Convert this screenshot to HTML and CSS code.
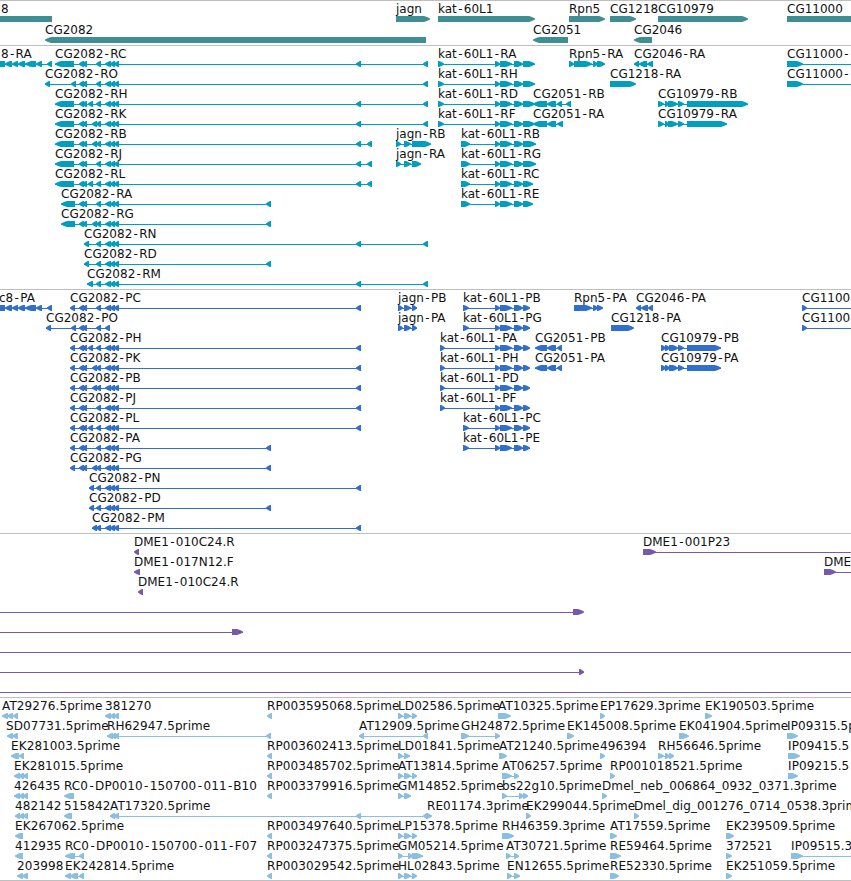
FILE: index.html
```
<!DOCTYPE html>
<html lang="en">
<head>
  <meta charset="UTF-8">
  <meta name="viewport" content="width=device-width, initial-scale=1.0">
  <title>Genome Browser</title>
  <link rel="stylesheet" href="styles.css">
</head>
<body>

  <main class="browser">
    <svg class="track genes" id="genes"></svg>
    <svg class="track transcripts" id="transcripts"></svg>
    <svg class="track proteins" id="proteins"></svg>
    <svg class="track clones" id="clones"></svg>
    <svg class="track ests" id="ests"></svg>
  </main>

  <script src="script.js"></script>
</body>
</html>
```
FILE: styles.css
```
body {
  margin: 0;
  background-color: #fff;
  overflow: hidden;
}

.browser {
  display: flex;
  flex-direction: column;
  border-bottom: 1px solid #bfbfbf;
}

.track {
  display: block;
  box-sizing: border-box;
  width: 100%;
  border-top: 1px solid #bfbfbf;
  overflow: hidden;
}

.track text {
  font-family: "DejaVu Sans", sans-serif;
  font-size: 12px;
  fill: #111;
}

.genes {
  height: 45px;
  color: #3e8e93;
}

.transcripts {
  height: 244px;
  color: #009fc0;
}

.proteins {
  height: 244px;
  color: #306fce;
}

.clones {
  height: 164px;
  color: #7859a8;
}

.ests {
  height: 183px;
  color: #8abfdf;
}

.ests text {
  letter-spacing: 0.1px;
}

.exon,
.intron {
  fill: currentColor;
}

.intron {
  shape-rendering: crispEdges;
}
```
FILE: script.js
```
const SVG = 'http://www.w3.org/2000/svg';
const OFF = 900; // past the right edge

// exon groups shared by the CG2082 isoforms
const B = '79:84 82:87 ';
const C = '96:101 ';
const K = '92:97 96:101 ';
const H = '88:93 96:101 ';
const D = '105:111 110:115 114:119 ';
const KAT = '495:500 500:512 514:523 ';
const THREE = '398:403 404:411 412:417';

// [row, label, label x, direction, exons, line start, line end]
const genes = [
  [0, '8', 1, 'r', '-10:52', 0, 0, 'flat'],
  [0, 'jagn', 396, 'r', '396:430'],
  [0, 'kat-60L1', 438, 'r', '438:535'],
  [0, 'Rpn5', 569, 'r', '569:605'],
  [0, 'CG1218', 610, 'r', '610:636'],
  [0, 'CG10979', 658, 'r', '658:748'],
  [0, 'CG11000', 787, 'r', '787:900'],
  [1, 'CG2082', 45, 'l', '45:426'],
  [1, 'CG2051', 533, 'l', '533:568'],
  [1, 'CG2046', 634, 'l', '634:652']
];

const transcripts = [
  [0, '8-RA', 1, 'l', '-10:5 5:12 12:18 18:25 25:36 36:42 47:52'],
  [0, 'CG2082-RC', 55, 'l', '55:74 ' + B + C + D + '356:361 423:428'],
  [1, 'CG2082-RO', 45, 'l', '45:50 71:76 ' + B + C + D + '423:428'],
  [2, 'CG2082-RH', 55, 'l', '55:74 ' + B + H + D + '356:361 423:428'],
  [3, 'CG2082-RK', 55, 'l', '55:74 ' + B + K + D + '356:361 423:428'],
  [4, 'CG2082-RB', 55, 'l', '55:74 ' + B + K + D + '356:361 367:372'],
  [5, 'CG2082-RJ', 55, 'l', '55:74 ' + B + C + D + '356:361 367:372'],
  [6, 'CG2082-RL', 55, 'l', '55:74 ' + B + H + D + '356:361 367:372'],
  [7, 'CG2082-RA', 61, 'l', '61:75 ' + B + C + D + '266:271'],
  [8, 'CG2082-RG', 61, 'l', '61:75 ' + B + K + D + '266:271'],
  [9, 'CG2082-RN', 84, 'l', '84:89 ' + C + D + '356:361 423:428'],
  [10, 'CG2082-RD', 84, 'l', '84:89 ' + C + D + '266:271'],
  [11, 'CG2082-RM', 87, 'l', '87:93 ' + C + D + '356:361 423:428'],
  [4, 'jagn-RB', 396, 'r', '396:401 404:411 412:431'],
  [5, 'jagn-RA', 396, 'r', '396:401 404:411 412:421'],
  [0, 'kat-60L1-RA', 438, 'r', '438:444 ' + KAT + '523:535'],
  [1, 'kat-60L1-RH', 438, 'r', '438:444 ' + KAT + '523:535'],
  [2, 'kat-60L1-RD', 438, 'r', '438:444 ' + KAT + '523:535'],
  [3, 'kat-60L1-RF', 438, 'r', '438:444 ' + KAT + '523:535'],
  [4, 'kat-60L1-RB', 461, 'r', '461:470 ' + KAT + '523:536'],
  [5, 'kat-60L1-RG', 461, 'r', '461:470 ' + KAT + '523:536'],
  [6, 'kat-60L1-RC', 461, 'r', '461:470 ' + KAT + '523:533'],
  [7, 'kat-60L1-RE', 461, 'r', '461:470 ' + KAT + '523:533'],
  [2, 'CG2051-RB', 533, 'l', '533:547 547:556 557:562 566:571'],
  [3, 'CG2051-RA', 533, 'l', '533:547 547:556 557:563'],
  [0, 'Rpn5-RA', 569, 'r', '569:574 574:592 593:598 597:605'],
  [0, 'CG2046-RA', 634, 'l', '634:639 639:647 647:653'],
  [1, 'CG1218-RA', 610, 'r', '610:636'],
  [2, 'CG10979-RB', 658, 'r', '658:664 665:669 668:678 678:684 687:748'],
  [3, 'CG10979-RA', 658, 'r', '658:664 665:669 668:678 678:684 687:727'],
  [0, 'CG11000-', 787, 'r', '787:803', 787, OFF],
  [1, 'CG11000-', 787, 'r', '787:803', 787, OFF]
];

const proteins = [
  [0, 'c8-PA', -1, 'l', '-10:5 5:12 12:18 18:25 25:36 36:42 47:52'],
  [0, 'CG2082-PC', 70, 'l', '70:75 ' + B + C + D + '356:361'],
  [1, 'CG2082-PO', 46, 'l', '46:51 71:76 ' + B + C + '105:110'],
  [2, 'CG2082-PH', 70, 'l', '70:75 ' + B + H + D + '356:361'],
  [3, 'CG2082-PK', 70, 'l', '70:75 ' + B + K + D + '356:361'],
  [4, 'CG2082-PB', 70, 'l', '70:75 ' + B + K + D + '356:361'],
  [5, 'CG2082-PJ', 70, 'l', '70:75 ' + B + C + D + '356:361'],
  [6, 'CG2082-PL', 70, 'l', '70:75 ' + B + H + D + '356:361'],
  [7, 'CG2082-PA', 70, 'l', '70:75 ' + B + C + D + '266:271'],
  [8, 'CG2082-PG', 70, 'l', '70:75 ' + B + K + D + '266:271'],
  [9, 'CG2082-PN', 89, 'l', '89:94 ' + C + D + '356:361'],
  [10, 'CG2082-PD', 89, 'l', '89:94 ' + C + D + '266:271'],
  [11, 'CG2082-PM', 92, 'l', K + D + '356:361'],
  [0, 'jagn-PB', 398, 'r', THREE],
  [1, 'jagn-PA', 398, 'r', THREE],
  [0, 'kat-60L1-PB', 463, 'r', '463:469 ' + KAT + '523:530'],
  [1, 'kat-60L1-PG', 463, 'r', '463:469 ' + KAT + '523:530'],
  [2, 'kat-60L1-PA', 440, 'r', '440:445 ' + KAT + '523:530'],
  [3, 'kat-60L1-PH', 440, 'r', '440:445 ' + KAT + '523:530'],
  [4, 'kat-60L1-PD', 440, 'r', '440:445 ' + KAT + '523:530'],
  [5, 'kat-60L1-PF', 440, 'r', '440:445 ' + KAT + '523:530'],
  [6, 'kat-60L1-PC', 463, 'r', '463:469 ' + KAT + '523:530'],
  [7, 'kat-60L1-PE', 463, 'r', '463:469 ' + KAT + '523:530'],
  [2, 'CG2051-PB', 535, 'l', '535:547 547:556 557:562'],
  [3, 'CG2051-PA', 535, 'l', '535:547 547:556 557:562'],
  [0, 'Rpn5-PA', 574, 'r', '574:592 593:598 597:603'],
  [0, 'CG2046-PA', 636, 'l', '636:641 641:648 648:653'],
  [1, 'CG1218-PA', 611, 'r', '611:634'],
  [2, 'CG10979-PB', 661, 'r', '661:666 665:670 669:678 678:684 687:721'],
  [3, 'CG10979-PA', 661, 'r', '661:666 665:670 669:678 678:684 687:721'],
  [0, 'CG1100', 802, 'r', '802:807', 802, OFF],
  [1, 'CG1100', 802, 'r', '802:807', 802, OFF]
];

const clones = [
  [0, 'DME1-010C24.R', 134, 'l', '134:139'],
  [1, 'DME1-017N12.F', 134, 'l', '134:140'],
  [2, 'DME1-010C24.R', 138, 'l', '138:143'],
  [0, 'DME1-001P23', 643, 'r', '643:656', 643, OFF],
  [1, 'DME', 824, 'r', '824:836', 824, OFF],
  [3, '', 0, 'r', '573:584', 0, 583],
  [4, '', 0, 'r', '232:243', 0, 243],
  [5, '', 0, 'r', '', 0, OFF],
  [6, '', 0, 'r', '579:584', 0, 584],
  [7, '', 0, 'r', '', 0, OFF]
];

const ests = [
  [0, 'AT29276.5prime', 2, 'l', '2:8 7:13 13:18'],
  [0, '381270', 105, 'l', '105:111 110:115 114:119'],
  [0, 'RP003595068.5prime', 267, 'l', '267:272'],
  [0, 'LD02586.5prime', 398, 'r', THREE],
  [0, 'AT10325.5prime', 498, 'r', '498:511'],
  [0, 'EP17629.3prime', 600, 'r', '600:605'],
  [0, 'EK190503.5prime', 705, 'r', '705:712'],

  [1, 'SD07731.5prime', 6, 'l', '7:13 12:18'],
  [1, 'RH62947.5prime', 107, 'l', '107:113 111:116 114:119 266:271'],
  [1, 'AT12909.5prime', 359, 'l', '359:364 423:428'],
  [1, 'GH24872.5prime', 461, 'r', '461:469 495:500'],
  [1, 'EK145008.5prime', 567, 'r', '567:574'],
  [1, 'EK041904.5prime', 679, 'r', '679:689'],
  [1, 'IP09315.5p', 787, 'r', '787:798'],

  [2, 'EK281003.5prime', 11, 'l', '11:19 19:24'],
  [2, 'RP003602413.5prime', 267, 'l', '267:272'],
  [2, 'LD01841.5prime', 398, 'r', '398:403 404:410'],
  [2, 'AT21240.5prime', 499, 'r', '499:507'],
  [2, '496394', 600, 'r', '600:605'],
  [2, 'RH56646.5prime', 658, 'r', '658:664 665:670 669:674'],
  [2, 'IP09415.5', 788, 'r', '788:800'],

  [3, 'EK281015.5prime', 14, 'l', '14:20 18:24 23:28'],
  [3, 'RP003485702.5prime', 267, 'l', '267:272'],
  [3, 'AT13814.5prime', 398, 'r', THREE],
  [3, 'AT06257.5prime', 502, 'r', '502:512 514:519'],
  [3, 'RP001018521.5prime', 610, 'r', '610:615'],
  [3, 'IP09215.5', 788, 'r', '788:798'],

  [4, '426435', 14, 'l', '14:20 19:24 23:28'],
  [4, 'RC0-DP0010-150700-011-B10', 64, 'l', '64:74'],
  [4, 'RP003379916.5prime', 267, 'l', '267:272'],
  [4, 'GM14852.5prime', 398, 'r', '398:403 404:411'],
  [4, 'bs22g10.5prime', 502, 'r', '502:507 519:524 523:528'],
  [4, 'Dmel_neb_006864_0932_0371.3prime', 602, 'r', '602:607'],

  [5, '482142', 15, 'l', '15:20 19:24 23:28'],
  [5, '515842', 64, 'l', '64:72'],
  [5, 'AT17320.5prime', 110, 'l', '110:115 114:119 356:361 423:428'],
  [5, 'RE01174.3prime', 427, 'r', '426:432'],
  [5, 'EK299044.5prime', 526, 'r', '526:531'],
  [5, 'Dmel_dig_001276_0714_0538.3prim', 634, 'r', '634:639'],

  [6, 'EK267062.5prime', 15, 'l', '15:23'],
  [6, 'RP003497640.5prime', 267, 'l', '267:272'],
  [6, 'LP15378.5prime', 398, 'r', THREE],
  [6, 'RH46359.3prime', 502, 'r', '502:514'],
  [6, 'AT17559.5prime', 610, 'r', '610:617'],
  [6, 'EK239509.5prime', 726, 'r', '726:734'],

  [7, '412935', 15, 'l', '15:23'],
  [7, 'RC0-DP0010-150700-011-F07', 65, 'l', '65:75 79:84'],
  [7, 'RP003247375.5prime', 267, 'l', '267:272'],
  [7, 'GM05214.5prime', 398, 'r', '398:403 408:413 412:423'],
  [7, 'AT30721.5prime', 506, 'r', '506:511 514:519'],
  [7, 'RE59464.5prime', 610, 'r', '610:621'],
  [7, '372521', 726, 'r', '726:732'],
  [7, 'IP09515.3', 791, 'r', '791:803', 791, OFF],

  [8, '203998', 17, 'l', '17:23 22:28'],
  [8, 'EK242814.5prime', 65, 'l', '65:71 70:78 79:84'],
  [8, 'RP003029542.5prime', 267, 'l', '267:272'],
  [8, 'HL02843.5prime', 398, 'r', THREE],
  [8, 'EN12655.5prime', 507, 'r', '507:512 514:520'],
  [8, 'RE52330.5prime', 610, 'r', '610:619'],
  [8, 'EK251059.5prime', 726, 'r', '726:732']
];

function add(svg, name, attrs) {
  const el = document.createElementNS(SVG, name);
  for (const key in attrs) {
    el.setAttribute(key, attrs[key]);
  }
  svg.appendChild(el);
  return el;
}

// a block with a pointed end, 6px high
function arrow(a, b, y, dir, flat) {
  if (flat) {
    return `M${a} ${y}H${b}v6H${a}z`;
  }
  const w = b - a;
  const head = w > 9 ? 6 : Math.min(w, 6) - 1;
  const tip = dir === 'r' ? b : a;
  const back = dir === 'r' ? a : b;
  const s = dir === 'r' ? -1 : 1;
  const neck = tip + s * head;
  const mid = tip + s * head / 2;
  return `M${back} ${y}H${neck}L${mid} ${y + 1}L${tip} ${y + 2.5}v1L${mid} ${y + 5}L${neck} ${y + 6}H${back}z`;
}

function drawTrack(id, features, pitch) {
  const svg = document.getElementById(id);

  features.forEach(([row, label, x, dir, exons, from, to, flat]) => {
    const top = row * pitch;
    const parts = exons.trim().split(' ').filter(Boolean).map(p => p.split(':').map(Number));
    const start = to ? from : parts[0][0];
    const end = to ? to : parts[parts.length - 1][1];

    if (to || parts.length > 1) {
      add(svg, 'rect', { class: 'intron', x: start, y: top + 18, width: end - start, height: 1 });
    }

    parts.forEach(([a, b]) => {
      add(svg, 'path', { class: 'exon', d: arrow(a, b, top + 15, dir, flat) });
    });

    if (label) {
      // extra room on both sides of a hyphen
      const dx = [...label].map((ch, i) => (ch === '-' || label[i - 1] === '-') ? 1.3 : 0);
      const text = add(svg, 'text', { x: x, y: top + 12 });
      if (label.includes('-')) {
        text.setAttribute('dx', dx.join(' '));
      }
      text.textContent = label;
    }
  });
}

drawTrack('genes', genes, 21);
drawTrack('transcripts', transcripts, 20);
drawTrack('proteins', proteins, 20);
drawTrack('clones', clones, 20);
drawTrack('ests', ests, 20);
```
